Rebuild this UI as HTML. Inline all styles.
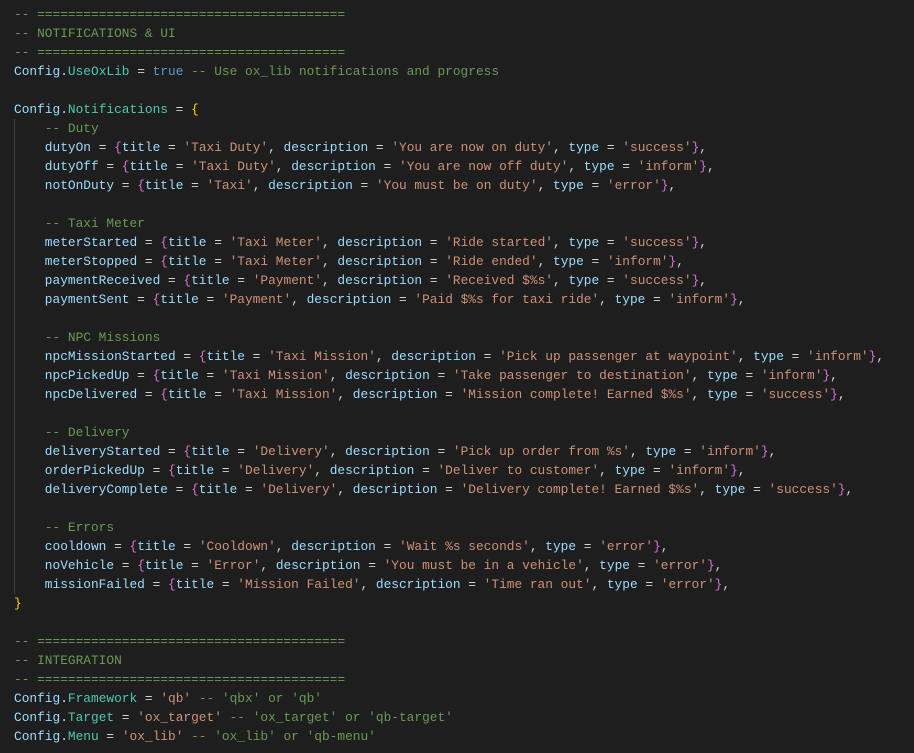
<!DOCTYPE html>
<html><head><style>
body{margin:0;background:#1e1e1e;width:914px;height:753px;overflow:hidden}
pre{margin:0;padding:5px 0 0 14px;font-family:"Liberation Mono",monospace;font-size:12.83px;line-height:19px;color:#d4d4d4;position:relative}
.c{color:#6a9955}.v{color:#9cdcfe}.f{color:#4ec9b0}.k{color:#569cd6}.s{color:#ce9178}.y{color:#ffd700}.p{color:#da70d6}
.g{position:absolute;left:14px;top:119px;width:1px;height:475px;background:#404040}
</style></head><body><div class="g"></div><pre><span class="c">-- ========================================</span>
<span class="c">-- NOTIFICATIONS &amp; UI</span>
<span class="c">-- ========================================</span>
<span class="v">Config</span>.<span class="f">UseOxLib</span> = <span class="k">true</span> <span class="c">-- Use ox_lib notifications and progress</span>

<span class="v">Config</span>.<span class="f">Notifications</span> = <span class="y">{</span>
    <span class="c">-- Duty</span>
    <span class="v">dutyOn</span> = <span class="p">{</span><span class="v">title</span> = <span class="s">'Taxi Duty'</span>, <span class="v">description</span> = <span class="s">'You are now on duty'</span>, <span class="v">type</span> = <span class="s">'success'</span><span class="p">}</span>,
    <span class="v">dutyOff</span> = <span class="p">{</span><span class="v">title</span> = <span class="s">'Taxi Duty'</span>, <span class="v">description</span> = <span class="s">'You are now off duty'</span>, <span class="v">type</span> = <span class="s">'inform'</span><span class="p">}</span>,
    <span class="v">notOnDuty</span> = <span class="p">{</span><span class="v">title</span> = <span class="s">'Taxi'</span>, <span class="v">description</span> = <span class="s">'You must be on duty'</span>, <span class="v">type</span> = <span class="s">'error'</span><span class="p">}</span>,

    <span class="c">-- Taxi Meter</span>
    <span class="v">meterStarted</span> = <span class="p">{</span><span class="v">title</span> = <span class="s">'Taxi Meter'</span>, <span class="v">description</span> = <span class="s">'Ride started'</span>, <span class="v">type</span> = <span class="s">'success'</span><span class="p">}</span>,
    <span class="v">meterStopped</span> = <span class="p">{</span><span class="v">title</span> = <span class="s">'Taxi Meter'</span>, <span class="v">description</span> = <span class="s">'Ride ended'</span>, <span class="v">type</span> = <span class="s">'inform'</span><span class="p">}</span>,
    <span class="v">paymentReceived</span> = <span class="p">{</span><span class="v">title</span> = <span class="s">'Payment'</span>, <span class="v">description</span> = <span class="s">'Received $%s'</span>, <span class="v">type</span> = <span class="s">'success'</span><span class="p">}</span>,
    <span class="v">paymentSent</span> = <span class="p">{</span><span class="v">title</span> = <span class="s">'Payment'</span>, <span class="v">description</span> = <span class="s">'Paid $%s for taxi ride'</span>, <span class="v">type</span> = <span class="s">'inform'</span><span class="p">}</span>,

    <span class="c">-- NPC Missions</span>
    <span class="v">npcMissionStarted</span> = <span class="p">{</span><span class="v">title</span> = <span class="s">'Taxi Mission'</span>, <span class="v">description</span> = <span class="s">'Pick up passenger at waypoint'</span>, <span class="v">type</span> = <span class="s">'inform'</span><span class="p">}</span>,
    <span class="v">npcPickedUp</span> = <span class="p">{</span><span class="v">title</span> = <span class="s">'Taxi Mission'</span>, <span class="v">description</span> = <span class="s">'Take passenger to destination'</span>, <span class="v">type</span> = <span class="s">'inform'</span><span class="p">}</span>,
    <span class="v">npcDelivered</span> = <span class="p">{</span><span class="v">title</span> = <span class="s">'Taxi Mission'</span>, <span class="v">description</span> = <span class="s">'Mission complete! Earned $%s'</span>, <span class="v">type</span> = <span class="s">'success'</span><span class="p">}</span>,

    <span class="c">-- Delivery</span>
    <span class="v">deliveryStarted</span> = <span class="p">{</span><span class="v">title</span> = <span class="s">'Delivery'</span>, <span class="v">description</span> = <span class="s">'Pick up order from %s'</span>, <span class="v">type</span> = <span class="s">'inform'</span><span class="p">}</span>,
    <span class="v">orderPickedUp</span> = <span class="p">{</span><span class="v">title</span> = <span class="s">'Delivery'</span>, <span class="v">description</span> = <span class="s">'Deliver to customer'</span>, <span class="v">type</span> = <span class="s">'inform'</span><span class="p">}</span>,
    <span class="v">deliveryComplete</span> = <span class="p">{</span><span class="v">title</span> = <span class="s">'Delivery'</span>, <span class="v">description</span> = <span class="s">'Delivery complete! Earned $%s'</span>, <span class="v">type</span> = <span class="s">'success'</span><span class="p">}</span>,

    <span class="c">-- Errors</span>
    <span class="v">cooldown</span> = <span class="p">{</span><span class="v">title</span> = <span class="s">'Cooldown'</span>, <span class="v">description</span> = <span class="s">'Wait %s seconds'</span>, <span class="v">type</span> = <span class="s">'error'</span><span class="p">}</span>,
    <span class="v">noVehicle</span> = <span class="p">{</span><span class="v">title</span> = <span class="s">'Error'</span>, <span class="v">description</span> = <span class="s">'You must be in a vehicle'</span>, <span class="v">type</span> = <span class="s">'error'</span><span class="p">}</span>,
    <span class="v">missionFailed</span> = <span class="p">{</span><span class="v">title</span> = <span class="s">'Mission Failed'</span>, <span class="v">description</span> = <span class="s">'Time ran out'</span>, <span class="v">type</span> = <span class="s">'error'</span><span class="p">}</span>,
<span class="y">}</span>

<span class="c">-- ========================================</span>
<span class="c">-- INTEGRATION</span>
<span class="c">-- ========================================</span>
<span class="v">Config</span>.<span class="f">Framework</span> = <span class="s">'qb'</span> <span class="c">-- 'qbx' or 'qb'</span>
<span class="v">Config</span>.<span class="f">Target</span> = <span class="s">'ox_target'</span> <span class="c">-- 'ox_target' or 'qb-target'</span>
<span class="v">Config</span>.<span class="f">Menu</span> = <span class="s">'ox_lib'</span> <span class="c">-- 'ox_lib' or 'qb-menu'</span>
</pre></body></html>
